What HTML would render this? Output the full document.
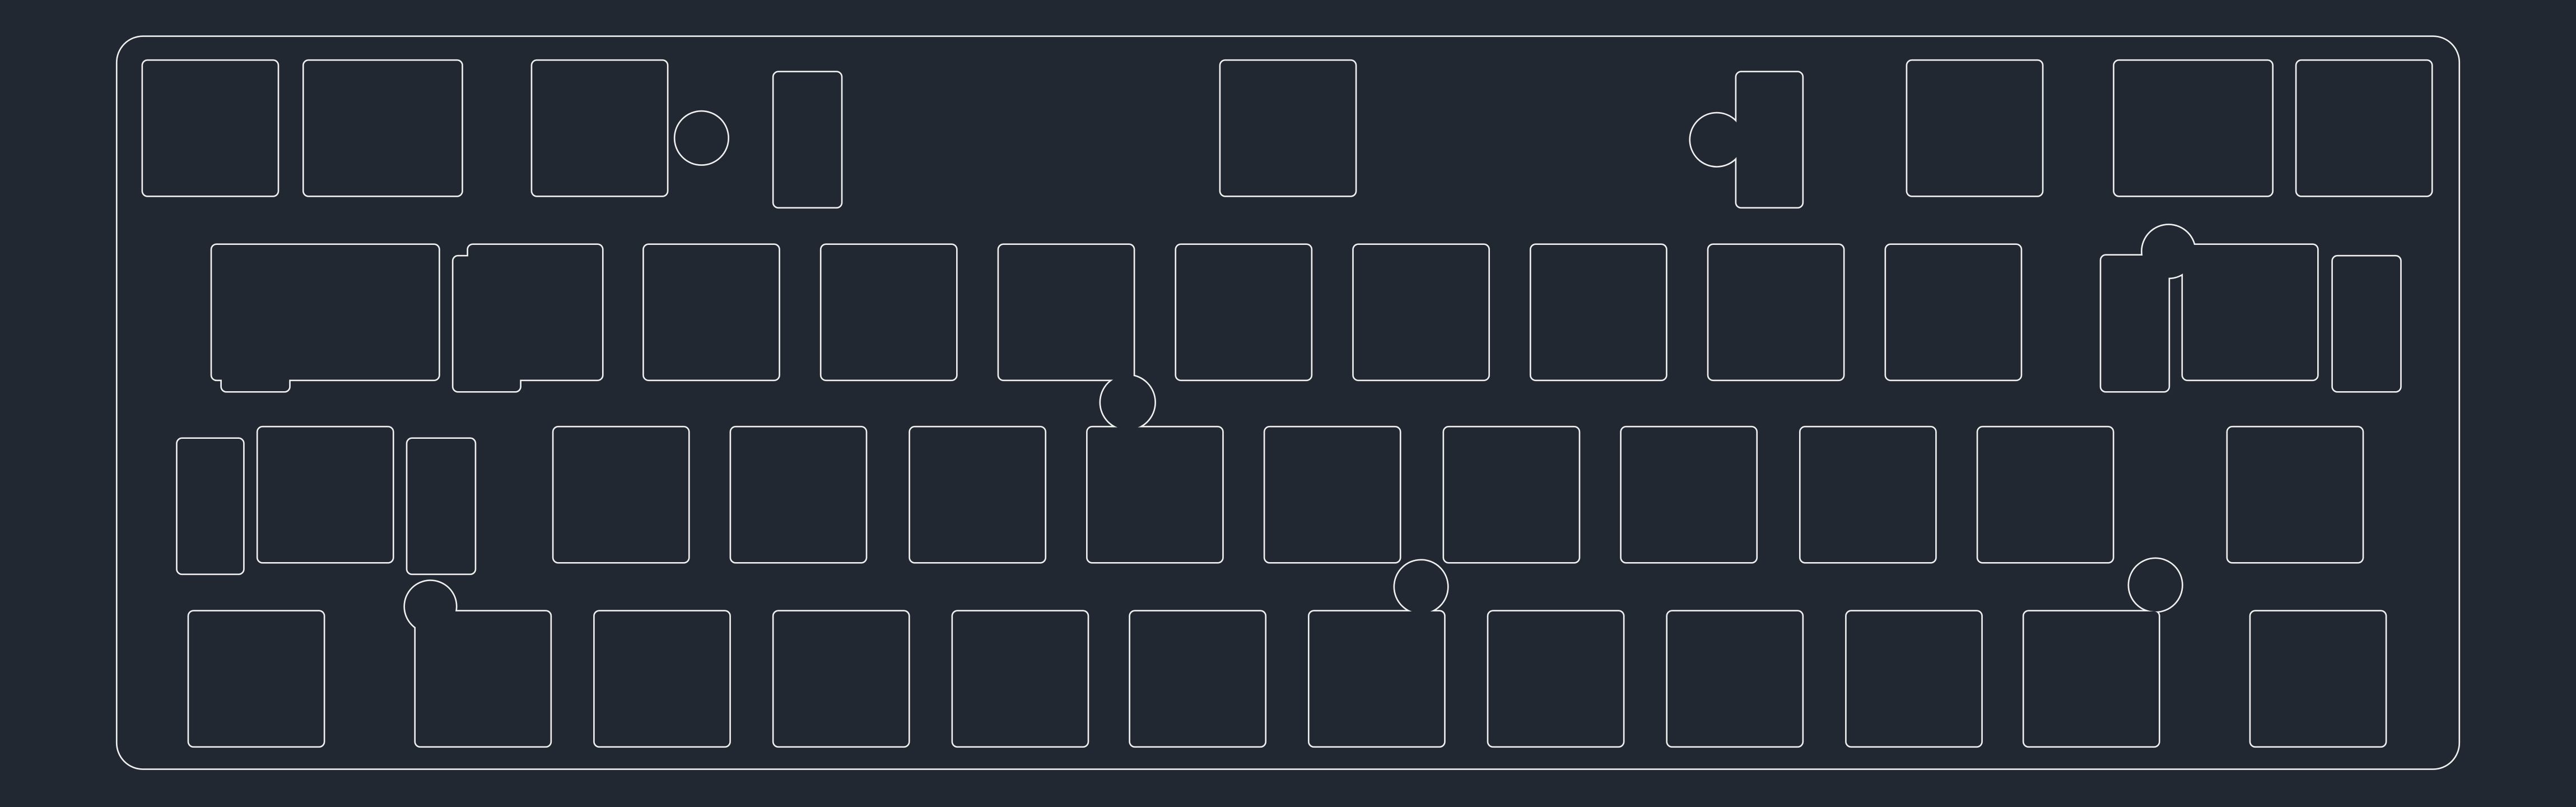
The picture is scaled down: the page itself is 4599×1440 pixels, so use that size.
<!DOCTYPE html>
<html><head><meta charset="utf-8"><style>
html,body{margin:0;padding:0;background:#222831;}
svg{display:block;}
</style></head><body>
<svg width="4599" height="1440" viewBox="0 0 1568 491" preserveAspectRatio="none" xmlns="http://www.w3.org/2000/svg">
<rect width="1568" height="491" fill="#222831"/>
<rect x="71" y="22" width="1426" height="446" rx="16" fill="none" stroke="#f0f0f0" stroke-width="0.9"/>
<defs>
<g id="shapes">
<rect x="87" y="37" width="82" height="82" rx="2.8"/>
<rect x="185" y="37" width="96" height="82" rx="2.8"/>
<rect x="324" y="37" width="82" height="82" rx="2.8"/>
<circle cx="427" cy="84" r="16"/>
<rect x="471" y="44" width="41" height="82" rx="2.8"/>
<rect x="743" y="37" width="82" height="82" rx="2.8"/>
<rect x="1057" y="44" width="40" height="82" rx="2.8"/>
<circle cx="1045" cy="85" r="16"/>
<rect x="1161" y="37" width="82" height="82" rx="2.8"/>
<rect x="1287" y="37" width="96" height="82" rx="2.8"/>
<rect x="1398" y="37" width="82" height="82" rx="2.8"/>
<rect x="129" y="149" width="138" height="82" rx="2.8"/>
<rect x="135" y="220" width="41" height="18" rx="2.8"/>
<rect x="285" y="149" width="81.5" height="82" rx="2.8"/>
<rect x="276" y="156" width="40.5" height="82" rx="2.8"/>
<rect x="392" y="149" width="82" height="82" rx="2.8"/>
<rect x="500" y="149" width="82" height="82" rx="2.8"/>
<rect x="608" y="149" width="82" height="82" rx="2.8"/>
<circle cx="686.4" cy="244.8" r="16.4"/>
<rect x="716" y="149" width="82" height="82" rx="2.8"/>
<rect x="824" y="149" width="82" height="82" rx="2.8"/>
<rect x="932" y="149" width="82" height="82" rx="2.8"/>
<rect x="1040" y="149" width="82" height="82" rx="2.8"/>
<rect x="1148" y="149" width="82" height="82" rx="2.8"/>
<rect x="1328.7" y="149" width="81.8" height="82" rx="2.8"/>
<rect x="1279" y="155.5" width="41" height="82.5" rx="2.8"/>
<circle cx="1320" cy="153" r="16"/>
<rect x="1310" y="149" width="25" height="16"/>
<rect x="1420" y="156" width="41" height="82" rx="2.8"/>
<rect x="108" y="267" width="40" height="82" rx="2.8"/>
<rect x="157" y="260" width="82" height="82" rx="2.8"/>
<rect x="248" y="267" width="41" height="82" rx="2.8"/>
<rect x="337" y="260" width="82" height="82" rx="2.8"/>
<rect x="445" y="260" width="82" height="82" rx="2.8"/>
<rect x="554" y="260" width="82" height="82" rx="2.8"/>
<rect x="662" y="260" width="82" height="82" rx="2.8"/>
<rect x="770" y="260" width="82" height="82" rx="2.8"/>
<rect x="879" y="260" width="82" height="82" rx="2.8"/>
<rect x="987" y="260" width="82" height="82" rx="2.8"/>
<rect x="1096" y="260" width="82" height="82" rx="2.8"/>
<rect x="1204" y="260" width="82" height="82" rx="2.8"/>
<rect x="1356" y="260" width="82" height="82" rx="2.8"/>
<rect x="115" y="372" width="82" height="82" rx="2.8"/>
<rect x="253" y="372" width="82" height="82" rx="2.8"/>
<circle cx="262" cy="369" r="15.5"/>
<rect x="362" y="372" width="82" height="82" rx="2.8"/>
<rect x="471" y="372" width="82" height="82" rx="2.8"/>
<rect x="580" y="372" width="82" height="82" rx="2.8"/>
<rect x="688" y="372" width="82" height="82" rx="2.8"/>
<rect x="797" y="372" width="82" height="82" rx="2.8"/>
<circle cx="865" cy="357" r="16"/>
<rect x="906" y="372" width="82" height="82" rx="2.8"/>
<rect x="1015" y="372" width="82" height="82" rx="2.8"/>
<rect x="1124" y="372" width="82" height="82" rx="2.8"/>
<rect x="1232" y="372" width="82" height="82" rx="2.8"/>
<circle cx="1312" cy="356" r="16"/>
<rect x="1370" y="372" width="82" height="82" rx="2.8"/>
</g>
</defs>
<use href="#shapes" fill="none" stroke="#f0f0f0" stroke-width="1.8"/>
<use href="#shapes" fill="#222831" stroke="none"/>
</svg>
</body></html>
